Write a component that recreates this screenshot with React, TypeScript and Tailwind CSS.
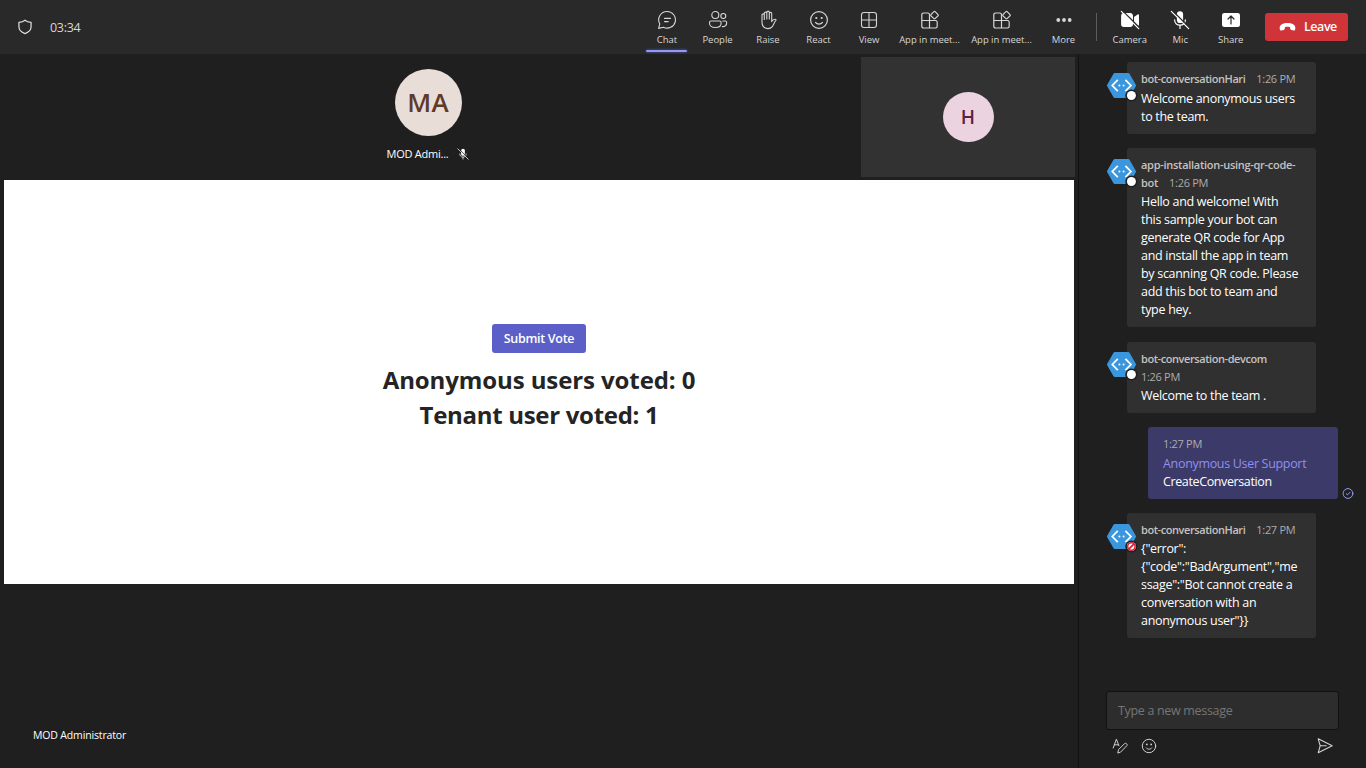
import React from "react";

type IconProps = { className?: string };

const stroke = {
  fill: "none",
  stroke: "currentColor",
  strokeWidth: 1,
  strokeLinecap: "round" as const,
  strokeLinejoin: "round" as const,
};

const ShieldIcon = ({ className }: IconProps) => (
  <svg viewBox="0 0 20 20" className={className} {...stroke} strokeWidth={1.5}>
    <path d="M10 1.500C8 3.300 5.600 4 2.400 4.100v5.400c0 4.400 2.800 7.200 7.600 8.800 4.800-1.600 7.600-4.400 7.600-8.800V4.100C14.400 4 12 3.300 10 1.500Z" />
  </svg>
);

const ChatIcon = ({ className }: IconProps) => (
  <svg viewBox="0 0 20 20" className={className} {...stroke} strokeWidth={1.1}>
    <path d="M10.300 1.500a8.300 8.300 0 1 1-3.900 15.700L1.600 18.400l1.200-4.500A8.300 8.300 0 0 1 10.300 1.500Z" />
    <path d="M7.500 8.400h6M7.500 11.600h3.700" />
  </svg>
);

const PeopleIcon = ({ className }: IconProps) => (
  <svg viewBox="0 0 20 20" className={className} {...stroke} strokeWidth={1.100}>
    <circle cx="7.300" cy="5" r="3.500" />
    <circle cx="15.300" cy="6" r="2.500" />
    <path d="M3 11h8.700c.8 0 1.400.6 1.400 1.400v.8c0 2.600-2.300 4.300-5.800 4.300s-5.800-1.700-5.800-4.300v-.8c0-.8.700-1.400 1.500-1.400Z" />
    <path d="M14.800 11h2.500c.8 0 1.400.6 1.400 1.400 0 2.500-1.500 4.200-4.400 4.200" />
  </svg>
);

const HandIcon = ({ className }: IconProps) => (
  <svg viewBox="0 0 20 20" className={className} {...stroke} strokeWidth={1.100}>
    <path d="M4 9V5c0-1.500 2.300-1.500 2.300 0v4.500V3.300c0-1.600 2.500-1.600 2.500 0V9 2.300c0-1.600 2.500-1.600 2.500 0V9 3.600c0-1.600 2.400-1.600 2.400 0v8c.7-1.300 1.900-2.500 3.700-2.300.5.1.8.6.5 1-1.700 1.800-2.100 4.300-3.600 6.300-1.100 1.400-2.600 2-4.400 2-4.400 0-5.900-3-5.900-6.600V9Z" />
  </svg>
);

const SmileIcon = ({ className }: IconProps) => (
  <svg viewBox="0 0 20 20" className={className} {...stroke} strokeWidth={1.200}>
    <circle cx="10" cy="10" r="8.400" />
    <path d="M6.500 12.400c1.700 2.200 5.300 2.200 7 0" />
    <circle cx="7.300" cy="8" r="1.100" fill="currentColor" stroke="none" />
    <circle cx="12.700" cy="8" r="1.100" fill="currentColor" stroke="none" />
  </svg>
);

const ViewIcon = ({ className }: IconProps) => (
  <svg viewBox="0 0 20 20" className={className} {...stroke} strokeWidth={1.100}>
    <rect x="2.500" y="2.500" width="15" height="15" rx="2.500" />
    <path d="M10 2.500v15M2.500 10h15" />
  </svg>
);

const AppsIcon = ({ className }: IconProps) => (
  <svg viewBox="0 0 20 20" className={className} {...stroke} strokeWidth={1.200}>
    <path d="M9.500 10.500h6c1 0 1.700.7 1.700 1.700v4.100c0 1-.7 1.700-1.700 1.700H3.500c-1 0-1.700-.7-1.700-1.700V4.700c0-1 .7-1.700 1.700-1.700h4.300c1 0 1.700.7 1.700 1.700V18M1.800 10.500h7.700" />
    <path d="m13.900 1.700-2.900 2.900c-.4.400-.4.800 0 1.200l2.900 2.900c.4.400.8.400 1.200 0L18 5.800c.4-.4.400-.8 0-1.200l-2.900-2.900c-.4-.4-.8-.4-1.200 0Z" />
  </svg>
);

const MoreIcon = ({ className }: IconProps) => (
  <svg viewBox="0 0 20 20" className={className} fill="currentColor">
    <circle cx="4.300" cy="10" r="1.900" />
    <circle cx="10" cy="10" r="1.900" />
    <circle cx="15.700" cy="10" r="1.900" />
  </svg>
);

const CameraOffIcon = ({ className }: IconProps) => (
  <svg viewBox="0 0 20 20" className={className}>
    <path
      fill="currentColor"
      d="M3.800 3h6.500c1.500 0 2.700 1.200 2.700 2.700v8.600c0 1.500-1.200 2.700-2.700 2.700H3.800a2.700 2.700 0 0 1-2.700-2.700V5.700C1.100 4.200 2.300 3 3.800 3ZM14 7l3.600-2.600c.6-.4 1.400 0 1.400.7v9.800c0 .7-.8 1.100-1.400.7L14 13V7Z"
    />
    <path d="M2.500.7 20 18.200" stroke="#292929" strokeWidth="1.300" />
    <path d="M1.300 1.300 18.700 18.700" stroke="currentColor" strokeWidth="1.200" strokeLinecap="round" />
  </svg>
);

const MicOffIcon = ({ className, bg = "#292929" }: IconProps & { bg?: string }) => (
  <svg viewBox="0 0 20 20" className={className}>
    <rect x="6.900" y="1.200" width="6.200" height="11.800" rx="3.100" fill="currentColor" />
    <path d="M4.600 9.800c0 3.200 2.300 5.400 5.400 5.400s5.400-2.200 5.400-5.400M10 15.200v3.300" fill="none" stroke="currentColor" strokeWidth="1.200" strokeLinecap="round" />
    <path d="M2.500.7 20 18.200" stroke={bg} strokeWidth="1.300" />
    <path d="M1.300 1.300 18.700 18.700" stroke="currentColor" strokeWidth="1.200" strokeLinecap="round" />
  </svg>
);

const ShareIcon = ({ className }: IconProps) => (
  <svg viewBox="0 0 20 20" className={className}>
    <rect x="1" y="3" width="18" height="14" rx="2.300" fill="currentColor" />
    <path d="M10 14V6.500M7 9l3-3 3 3" fill="none" stroke="#292929" strokeWidth="1.200" strokeLinecap="round" strokeLinejoin="round" />
  </svg>
);

const HangUpIcon = ({ className }: IconProps) => (
  <svg viewBox="0 0 18 10" className={className} fill="currentColor">
    <path d="M9 .7c4.800 0 8.300 2 8.300 5.200 0 .6-.1 1.300-.3 1.900-.2.700-.8 1-1.500.9l-2.400-.5c-.7-.1-1.100-.6-1.200-1.300l-.2-1.800C10.800 4.800 9.900 4.700 9 4.700s-1.800.1-2.700.4l-.2 1.800c-.1.700-.5 1.200-1.200 1.300l-2.400.5c-.7.1-1.300-.2-1.500-.9-.2-.6-.3-1.300-.3-1.900C.7 2.700 4.200.7 9 .7Z" />
  </svg>
);

const FormatIcon = ({ className }: IconProps) => (
  <svg viewBox="0 0 20 20" className={className} {...stroke} strokeWidth={1.200}>
    <path d="M1.500 12.500 5.500 1.500l3.200 8.200M2.900 8.500h5.200" />
    <path d="m7.300 18.400.9-4 7.400-7.200c1.800-1.700 4.500.9 2.700 2.700l-7.300 7.500Z" />
  </svg>
);

const SendIcon = ({ className }: IconProps) => (
  <svg viewBox="0 0 20 20" className={className} {...stroke} strokeWidth={1.300}>
    <path d="m1.500 1 17.500 8.700-17.500 8.800 2.500-8.800L1.500 1ZM4 9.700h7.500" />
  </svg>
);

const SentIcon = ({ className }: IconProps) => (
  <svg viewBox="0 0 12 12" className={className} {...stroke}>
    <circle cx="6" cy="6.500" r="4.900" />
    <path d="M4.200 6.700 5.500 7.900 7.900 5.400" />
  </svg>
);

const BotAvatar = ({ blocked, raised }: { blocked?: boolean; raised?: boolean }) => (
  <svg viewBox="0 0 32 32" className={`absolute -left-5 h-8 w-8 ${raised ? "top-[9px]" : "top-[10px]"}`}>
    <path d="M7.700 1h13.600c.5 0 .9.200 1.200.7l6.300 11c.3.500.3 1.100 0 1.600l-6.300 11c-.3.500-.7.700-1.200.7H7.700c-.5 0-.9-.2-1.200-.7l-6.300-11a1.500 1.500 0 0 1 0-1.600l6.300-11c.3-.5.7-.7 1.200-.7Z" fill="#3a96dd" />
    <path d="m10.800 7.800-5.500 5.700 5.500 5.700M18.400 7.800l5.500 5.700-5.500 5.700" fill="none" stroke="#fff" strokeWidth="1.800" />
    <circle cx="12.400" cy="13.500" r="1" fill="#fff" />
    <circle cx="16.600" cy="13.500" r="1" fill="#fff" />
    <circle cx="24.400" cy="23.500" r="6.100" fill="#1f1f1f" />
    <circle cx="24.400" cy="23.500" r="4.500" fill="#fff" />
    {blocked && (
      <g fill="none" stroke="#d91e36">
        <circle cx="24.400" cy="23.500" r="3.700" strokeWidth="1.500" />
        <path d="m22 25.900 4.800-4.800" strokeWidth="1.800" />
      </g>
    )}
  </svg>
);

const ToolItem = ({
  label,
  icon,
  active,
  wide,
  bright,
}: {
  label: string;
  icon: React.ReactNode;
  active?: boolean;
  wide?: boolean;
  bright?: boolean;
}) => (
  <button className={`relative flex h-[54px] shrink-0 flex-col items-center pt-[10px] ${wide ? "w-[72px]" : "w-[50.5px]"}`}>
    <span className={`flex h-5 items-center ${bright ? "text-white" : "text-[#d6d6d6]"}`}>{icon}</span>
    <span className="mt-[3px] whitespace-nowrap text-[9.5px] leading-[14px] tracking-[-0.03px] text-[#d6d6d6]">{label}</span>
    {active && <span className="absolute bottom-[2px] left-[4px] h-[2px] w-[41px] rounded-full bg-[#9299f7] shadow-[0_0_3px_#5b5fc7]" />}
  </button>
);

const Lines = ({ lines }: { lines: string[] }) => (
  <div className="mt-px text-[12.5px] leading-[18px] tracking-[-0.3px] text-white">
    {lines.map((l) => (
      <div key={l} className="whitespace-nowrap">
        {l}
      </div>
    ))}
  </div>
);

const Name = ({ children, loose }: { children: React.ReactNode; loose?: boolean }) => (
  <span className={`font-semibold text-[#c4c2c0] ${loose ? "tracking-[-0.28px]" : "tracking-[-0.43px]"}`}>{children}</span>
);

const Time = ({ children }: { children: React.ReactNode }) => <span className="tracking-[-0.3px] text-[#adadad]">{children}</span>;

const cardBase = "relative w-[189px] rounded-[3px] bg-[#303030] pl-[14px] pt-2";
const metaBase = "whitespace-nowrap text-[11px] leading-[18px]";

export default function App() {
  return (
    <div className="flex h-[768px] w-[1366px] flex-col overflow-hidden bg-[#1f1f1f] font-['Open_Sans','Noto_Sans',sans-serif]">
      <header className="flex h-[54px] shrink-0 items-start bg-[#292929]">
        <div className="flex h-[54px] w-[641.75px] items-center gap-[17px] pl-[17px]">
          <ShieldIcon className="h-4 w-4 text-[#e0e0e0]" />
          <span className="pt-[2px] text-[12.5px] tracking-[-0.3px] text-[#d6d6d6]">03:34</span>
        </div>
        <ToolItem active label="Chat" icon={<ChatIcon className="h-5 w-5" />} />
        <ToolItem label="People" icon={<PeopleIcon className="h-5 w-5" />} />
        <ToolItem label="Raise" icon={<HandIcon className="h-5 w-5" />} />
        <ToolItem label="React" icon={<SmileIcon className="h-5 w-5" />} />
        <ToolItem label="View" icon={<ViewIcon className="h-5 w-5" />} />
        <div className="-ml-[0.75px] mr-[0.75px] flex">
          <ToolItem wide label="App in meet..." icon={<AppsIcon className="h-5 w-5" />} />
          <ToolItem wide label="App in meet..." icon={<AppsIcon className="h-5 w-5" />} />
        </div>
        <ToolItem label="More" icon={<MoreIcon className="h-5 w-5" />} />
        <div className="ml-[6.75px] mr-[8px] mt-[13px] h-7 w-px bg-[#5c5c5c]" />
        <ToolItem bright label="Camera" icon={<CameraOffIcon className="h-5 w-5" />} />
        <ToolItem bright label="Mic" icon={<MicOffIcon className="h-5 w-5" />} />
        <ToolItem bright label="Share" icon={<ShareIcon className="h-5 w-5" />} />
        <button className="ml-[9px] mt-[13px] flex h-7 w-[83px] items-center gap-2 rounded-[3px] bg-[#d13438] pl-[14px] text-[12.5px] font-semibold tracking-[-0.45px] text-white">
          <HangUpIcon className="h-[10px] w-[17px]" />
          <span className="pt-px">Leave</span>
        </button>
      </header>

      <div className="flex min-h-0 flex-1">
        <main className="flex w-[1078px] flex-col">
          <div className="flex h-[126px] shrink-0">
            <div className="flex w-[861px] flex-col items-center pr-[5px] pt-[15px]">
              <div className="flex h-[67px] w-[67px] items-center justify-center rounded-full bg-[#e9ddd8] text-[26px] font-semibold tracking-[0.3px] text-[#5f3a2b]">
                MA
              </div>
              <div className="mt-[9px] flex h-[18px] items-center gap-[9px] text-[11px] tracking-[-0.25px] text-white">
                MOD Admi...
                <MicOffIcon bg="#1f1f1f" className="h-3 w-3" />
              </div>
            </div>
            <div className="mt-[3px] flex h-[120px] w-[214px] items-center justify-center bg-[#323232]">
              <div className="flex h-[50px] w-[51px] items-center justify-center rounded-full bg-[#ebd3e0] text-[19px] font-semibold text-[#5f1f46]">
                H
              </div>
            </div>
          </div>

          <section className="ml-1 flex h-[404px] w-[1070px] shrink-0 flex-col items-center bg-white pt-36">
            <button className="h-[29px] w-[94px] rounded-[3px] bg-[#5b5fc7] pt-[2px] text-[12.5px] font-semibold tracking-[-0.3px] text-white">
              Submit Vote
            </button>
            <div className="mt-[9px] text-center text-[24px] font-bold leading-[35px] text-[#242424]">
              <h1 className="tracking-[-0.1px]">Anonymous users voted: 0</h1>
              <h1 className="tracking-[-0.3px]">Tenant user voted: 1</h1>
            </div>
          </section>

          <div className="flex flex-1 items-end pb-6 pl-[33px] text-[10.5px] leading-[18px] tracking-[-0.15px] text-white">MOD Administrator</div>
        </main>

        <aside className="flex w-[288px] flex-col border-l border-[#111111] pt-2">
          <div className="flex flex-1 flex-col pl-12">
            <article className={`${cardBase} h-[72px]`}>
              <BotAvatar />
              <div className={`${metaBase} flex gap-[11px]`}>
                <Name>bot-conversationHari</Name>
                <Time>1:26 PM</Time>
              </div>
              <div className="pt-px">
                <Lines lines={["Welcome anonymous users", "to the team."]} />
              </div>
            </article>

            <article className={`${cardBase} mt-[14px] h-[179px]`}>
              <BotAvatar />
              <div className={metaBase}>
                <Name loose>app-installation-using-qr-code-</Name>
                <div className="flex gap-[11px]">
                  <Name loose>bot</Name>
                  <Time>1:26 PM</Time>
                </div>
              </div>
              <Lines
                lines={[
                  "Hello and welcome! With",
                  "this sample your bot can",
                  "generate QR code for App",
                  "and install the app in team",
                  "by scanning QR code. Please",
                  "add this bot to team and",
                  "type hey.",
                ]}
              />
            </article>

            <article className={`${cardBase} mt-[15px] h-[71px]`}>
              <BotAvatar raised />
              <div className={`${metaBase} flex flex-col`}>
                <Name>bot-conversation-devcom</Name>
                <Time>1:26 PM</Time>
              </div>
              <Lines lines={["Welcome to the team ."]} />
            </article>

            <div className="ml-[21px] mt-[14px] flex items-end gap-[4px]">
              <article className="h-[72px] w-[190px] rounded-[3px] bg-[#3b3a68] pl-[15px] pt-2">
                <div className={metaBase}>
                  <Time>1:27 PM</Time>
                </div>
                <div className="mt-[2px] text-[12.5px] leading-[18px] tracking-[-0.32px] text-[#8f90f0]">Anonymous User Support</div>
                <div className="text-[12.5px] leading-[18px] tracking-[-0.38px] text-white">CreateConversation</div>
              </article>
              <SentIcon className="h-3 w-3 text-[#9299f7]" />
            </div>

            <article className={`${cardBase} mt-[14px] h-[125px]`}>
              <BotAvatar blocked />
              <div className={`${metaBase} flex gap-[11px]`}>
                <Name>bot-conversationHari</Name>
                <Time>1:27 PM</Time>
              </div>
              <Lines lines={['{"error":', '{"code":"BadArgument","me', 'ssage":"Bot cannot create a', "conversation with an", 'anonymous user"}}']} />
            </article>
          </div>

          <div className="pl-[27px]">
            <div className="flex h-[39px] w-[233px] items-center rounded-[3px] border border-[#111111] bg-[#2d2d2d] pl-[11px] pt-[2px] text-[12.5px] tracking-[-0.32px] text-[#757575]">
              Type a new message
            </div>
            <div className="flex h-[38px] w-[233px] items-start pl-[6px] pr-[6px] pt-[8px] text-[#d6d6d6]">
              <FormatIcon className="h-4 w-4" />
              <SmileIcon className="ml-[13px] h-4 w-4" />
              <SendIcon className="ml-auto h-4 w-4" />
            </div>
          </div>
        </aside>
      </div>
    </div>
  );
}
